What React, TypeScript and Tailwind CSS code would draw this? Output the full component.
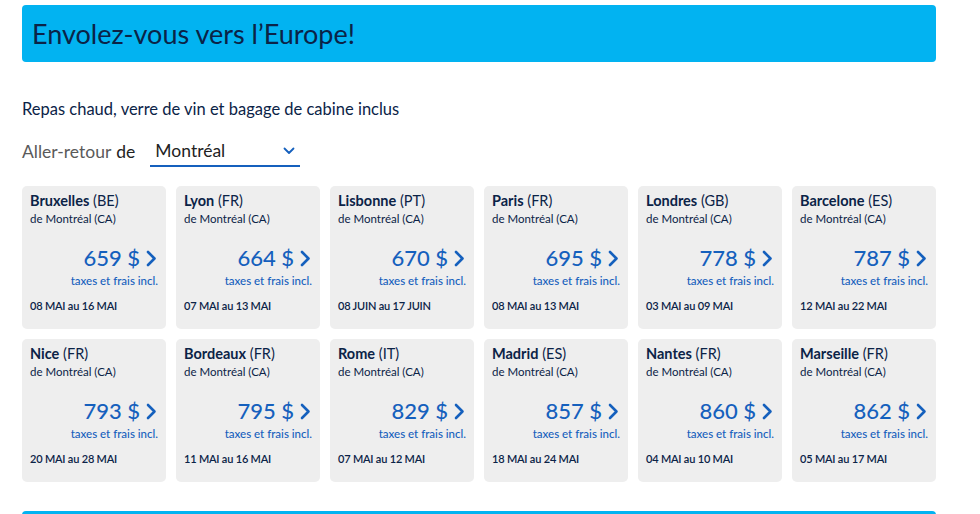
import React from "react";

const deals = [
  { city: "Bruxelles", cc: "BE", price: 659, dates: "08 MAI au 16 MAI" },
  { city: "Lyon", cc: "FR", price: 664, dates: "07 MAI au 13 MAI" },
  { city: "Lisbonne", cc: "PT", price: 670, dates: "08 JUIN au 17 JUIN" },
  { city: "Paris", cc: "FR", price: 695, dates: "08 MAI au 13 MAI" },
  { city: "Londres", cc: "GB", price: 778, dates: "03 MAI au 09 MAI" },
  { city: "Barcelone", cc: "ES", price: 787, dates: "12 MAI au 22 MAI" },
  { city: "Nice", cc: "FR", price: 793, dates: "20 MAI au 28 MAI" },
  { city: "Bordeaux", cc: "FR", price: 795, dates: "11 MAI au 16 MAI" },
  { city: "Rome", cc: "IT", price: 829, dates: "07 MAI au 12 MAI" },
  { city: "Madrid", cc: "ES", price: 857, dates: "18 MAI au 24 MAI" },
  { city: "Nantes", cc: "FR", price: 860, dates: "04 MAI au 10 MAI" },
  { city: "Marseille", cc: "FR", price: 862, dates: "05 MAI au 17 MAI" },
];

function Chevron() {
  return (
    <svg width="11" height="17" viewBox="0 0 11 17" className="ml-[6px]">
      <path d="M2 2 L8.5 8.5 L2 15" fill="none" stroke="#1560bd" strokeWidth="2.6" strokeLinecap="round" strokeLinejoin="round" />
    </svg>
  );
}

function Card({ d }: { d: (typeof deals)[number] }) {
  return (
    <div className="flex h-[143px] flex-col rounded-[5px] bg-[#eeeeee] px-[8px] pt-[6px]">
      <div className="text-[14.5px] leading-[18px] text-[#0b2347]">
        <span className="font-bold">{d.city}</span> <span>({d.cc})</span>
      </div>
      <div className="mt-[1px] text-[11.5px] leading-[16px] text-[#0b2347]">de Montréal (CA)</div>
      <div className="mt-[18px] flex items-center justify-end pr-[1px]">
        <span className="text-[22px] font-medium leading-[26px] text-[#1560bd]">{d.price} $</span>
        <Chevron />
      </div>
      <div className="mt-[3px] text-right text-[11.5px] font-medium leading-[14px] text-[#1560bd]">taxes et frais incl.</div>
      <div className="mt-[11px] text-[11px] font-semibold leading-[14px] tracking-[-0.2px] text-[#0b2347]">{d.dates}</div>
    </div>
  );
}

export default function App() {
  return (
    <div className="min-h-[514px] bg-white pt-[5px]" style={{ fontFamily: "Lato, 'Noto Sans', sans-serif" }}>
      <div className="ml-[22px] w-[914px]">
        <div className="flex h-[57px] items-center rounded-[4px] bg-[#02b3f1] pl-[10px]">
          <h1 className="text-[27px] font-normal leading-none text-[#0b2347]">Envolez-vous vers l’Europe!</h1>
        </div>
        <p className="mt-[37px] text-[16.5px] leading-[20px] text-[#0b2347]">Repas chaud, verre de vin et bagage de cabine inclus</p>
        <div className="mt-[18px] flex items-center">
          <span className="text-[17.5px] text-[#5a5a5a]">Aller-retour</span>
          <span className="ml-[5px] text-[17.5px] text-[#222]">de</span>
          <div className="ml-[15px] flex h-[30px] w-[150px] items-center justify-between border-b-2 border-[#1560bd] pl-[5px] pr-[5px]">
            <span className="text-[17.5px] text-[#222]">Montréal</span>
            <svg width="12" height="8" viewBox="0 0 12 8">
              <path d="M1.5 1.5 L6 6 L10.5 1.5" fill="none" stroke="#1560bd" strokeWidth="1.8" strokeLinecap="round" strokeLinejoin="round" />
            </svg>
          </div>
        </div>
        <div className="mt-[19px] grid grid-cols-6 gap-[10px]">
          {deals.map((d) => (
            <Card key={d.city} d={d} />
          ))}
        </div>
        <div className="mt-[29px] h-[20px] rounded-t-[4px] bg-[#02b3f1]" />
      </div>
    </div>
  );
}
